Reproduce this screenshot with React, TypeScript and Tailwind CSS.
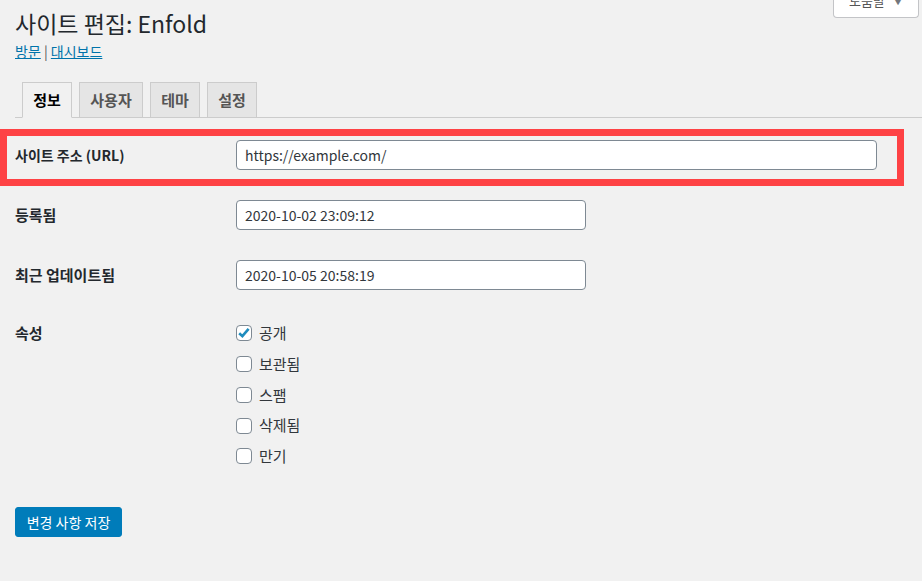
import React from "react";

const font = { fontFamily: '"Noto Sans CJK KR", "Noto Sans", sans-serif' };

function Checkbox({ checked }: { checked?: boolean }) {
  return (
    <span className="flex h-[16px] w-[16px] shrink-0 items-center justify-center rounded-[4px] border border-[#7e8993] bg-white">
      {checked && (
        <svg width="14" height="14" viewBox="0 0 14 14">
          <path d="M2.2 7.2 L5.4 10.2 L11.6 2.8" fill="none" stroke="#1e8cbe" strokeWidth="2.6" strokeLinejoin="miter" />
        </svg>
      )}
    </span>
  );
}

function Field({ label, value, wide, size }: { label: string; value: string; wide?: boolean; size: string }) {
  return (
    <div className="flex h-[60px] items-center">
      <div className={`w-[221px] ${size} font-semibold leading-[20px] text-[#23282d]`}>{label}</div>
      <div
        className={`flex h-[30px] items-center rounded-[4px] border border-[#7e8993] bg-white px-[8px] text-[14px] text-[#32373c] ${
          wide ? "w-[641px]" : "w-[350px]"
        }`}
      >
        {value}
      </div>
    </div>
  );
}

export default function App() {
  const statuses = [
    { label: "공개", checked: true },
    { label: "보관됨" },
    { label: "스팸" },
    { label: "삭제됨" },
    { label: "만기" },
  ];
  const tabs = [
    { t: "사용자", w: "w-[64px]" },
    { t: "테마", w: "w-[50px]" },
    { t: "설정", w: "w-[50px]" },
  ];
  return (
    <div className="relative h-[581px] w-full overflow-hidden bg-[#f1f1f1]" style={font}>
      <div className="absolute right-[3px] top-0 flex h-[18px] w-[86px] items-start rounded-b-[4px] border border-t-0 border-[#c3c4c7] bg-white pl-[15px] text-[13px] leading-[18px] text-[#555]">
        <span className="-mt-[8px]">도움말</span>
        <span className="-mt-[8px] ml-[8px] text-[10px] text-[#72777c]">▼</span>
      </div>

      <div className="pl-[15px]">
        <h1 className="pt-[9px] text-[23px] font-normal leading-[29px] text-[#23282d]">사이트 편집: Enfold</h1>
        <div className="mt-[4px] text-[14px] leading-[18px] text-[#555]">
          <a className="text-[#0073aa] underline">방문</a>
          <span> | </span>
          <a className="text-[#0073aa] underline">대시보드</a>
        </div>

        <div className="mt-[22px] flex border-b border-[#ccc]">
          <div className="-mb-px ml-[7px] h-[36px] w-[50px] border border-[#ccc] border-b-[#f1f1f1] bg-[#f1f1f1] py-[5px] text-center text-[15px] font-semibold leading-[24px] text-black">
            정보
          </div>
          {tabs.map((t) => (
            <div
              key={t.t}
              className={`ml-[7px] h-[35px] ${t.w} border border-b-0 border-[#ccc] bg-[#e5e5e5] py-[5px] text-center text-[15px] font-semibold leading-[24px] text-[#555]`}
            >
              {t.t}
            </div>
          ))}
        </div>

        <div className="mt-[7px]">
          <Field label="사이트 주소 (URL)" value="https://example.com/" wide size="text-[14px]" />
          <Field label="등록됨" value="2020-10-02 23:09:12" size="text-[15px]" />
          <Field label="최근 업데이트됨" value="2020-10-05 20:58:19" size="text-[15px]" />
          <div className="flex">
            <div className="w-[221px] pt-[18px] text-[15px] font-semibold leading-[20px] text-[#23282d]">속성</div>
            <div className="flex flex-col pt-[13px]">
              {statuses.map((s) => (
                <div key={s.label} className="flex h-[30.75px] items-center gap-[7px] text-[15px] text-[#32373c]">
                  <Checkbox checked={s.checked} />
                  <span>{s.label}</span>
                </div>
              ))}
            </div>
          </div>
        </div>

        <button className="mt-[35px] flex h-[30px] w-[107px] items-center justify-center rounded-[3px] border border-[#007cba] bg-[#007cba] text-[14px] leading-[28px] text-white">
          변경 사항 저장
        </button>
      </div>

      <div className="pointer-events-none absolute left-0 top-[129px] h-[57px] w-[904px] border-[7px] border-[#fe4245]" />
    </div>
  );
}
